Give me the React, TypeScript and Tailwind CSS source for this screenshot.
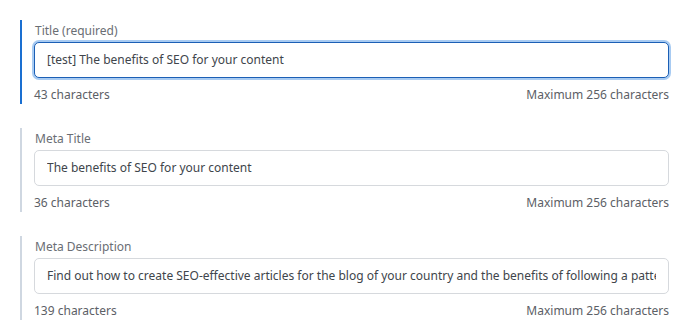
import { useState } from 'react';

interface FieldProps {
  label: string;
  value: string;
  focused?: boolean;
}

function Field({ label, value, focused }: FieldProps) {
  const [text, setText] = useState(value);

  return (
    <div
      className={`border-l-2 pl-3 ${focused ? 'border-[#1a6fd1]' : 'border-[#cfd7e1]'}`}
    >
      <div className="h-[22px] flex items-center pl-px text-[12px] text-[#6a6e74]">{label}</div>
      <div
        className={`h-9 rounded-[5px] bg-white flex items-center px-3 ${
          focused
            ? 'border border-[#1b5fb5] ring-2 ring-[#a8cbf2]'
            : 'border border-[#d6d9dd]'
        }`}
      >
        <input
          value={text}
          onChange={(e) => setText(e.target.value)}
          className="w-full min-w-0 bg-transparent outline-none text-[12px] text-[#40454b]"
        />
      </div>
      <div className="mt-2 h-[18px] flex items-center justify-between text-[12px] text-[#5c6066]">
        <span>{text.length} characters</span>
        <span>Maximum 256 characters</span>
      </div>
    </div>
  );
}

export default function App() {
  return (
    <div
      className="min-h-screen bg-white pt-5 pl-5 pr-[29px] flex flex-col gap-6"
      style={{ fontFamily: '"Noto Sans", "Open Sans", sans-serif' }}
    >
      <Field label="Title (required)" value="[test] The benefits of SEO for your content" focused />
      <Field label="Meta Title" value="The benefits of SEO for your content" />
      <Field
        label="Meta Description"
        value="Find out how to create SEO-effective articles for the blog of your country and the benefits of following a pattern in the content creation."
      />
    </div>
  );
}
